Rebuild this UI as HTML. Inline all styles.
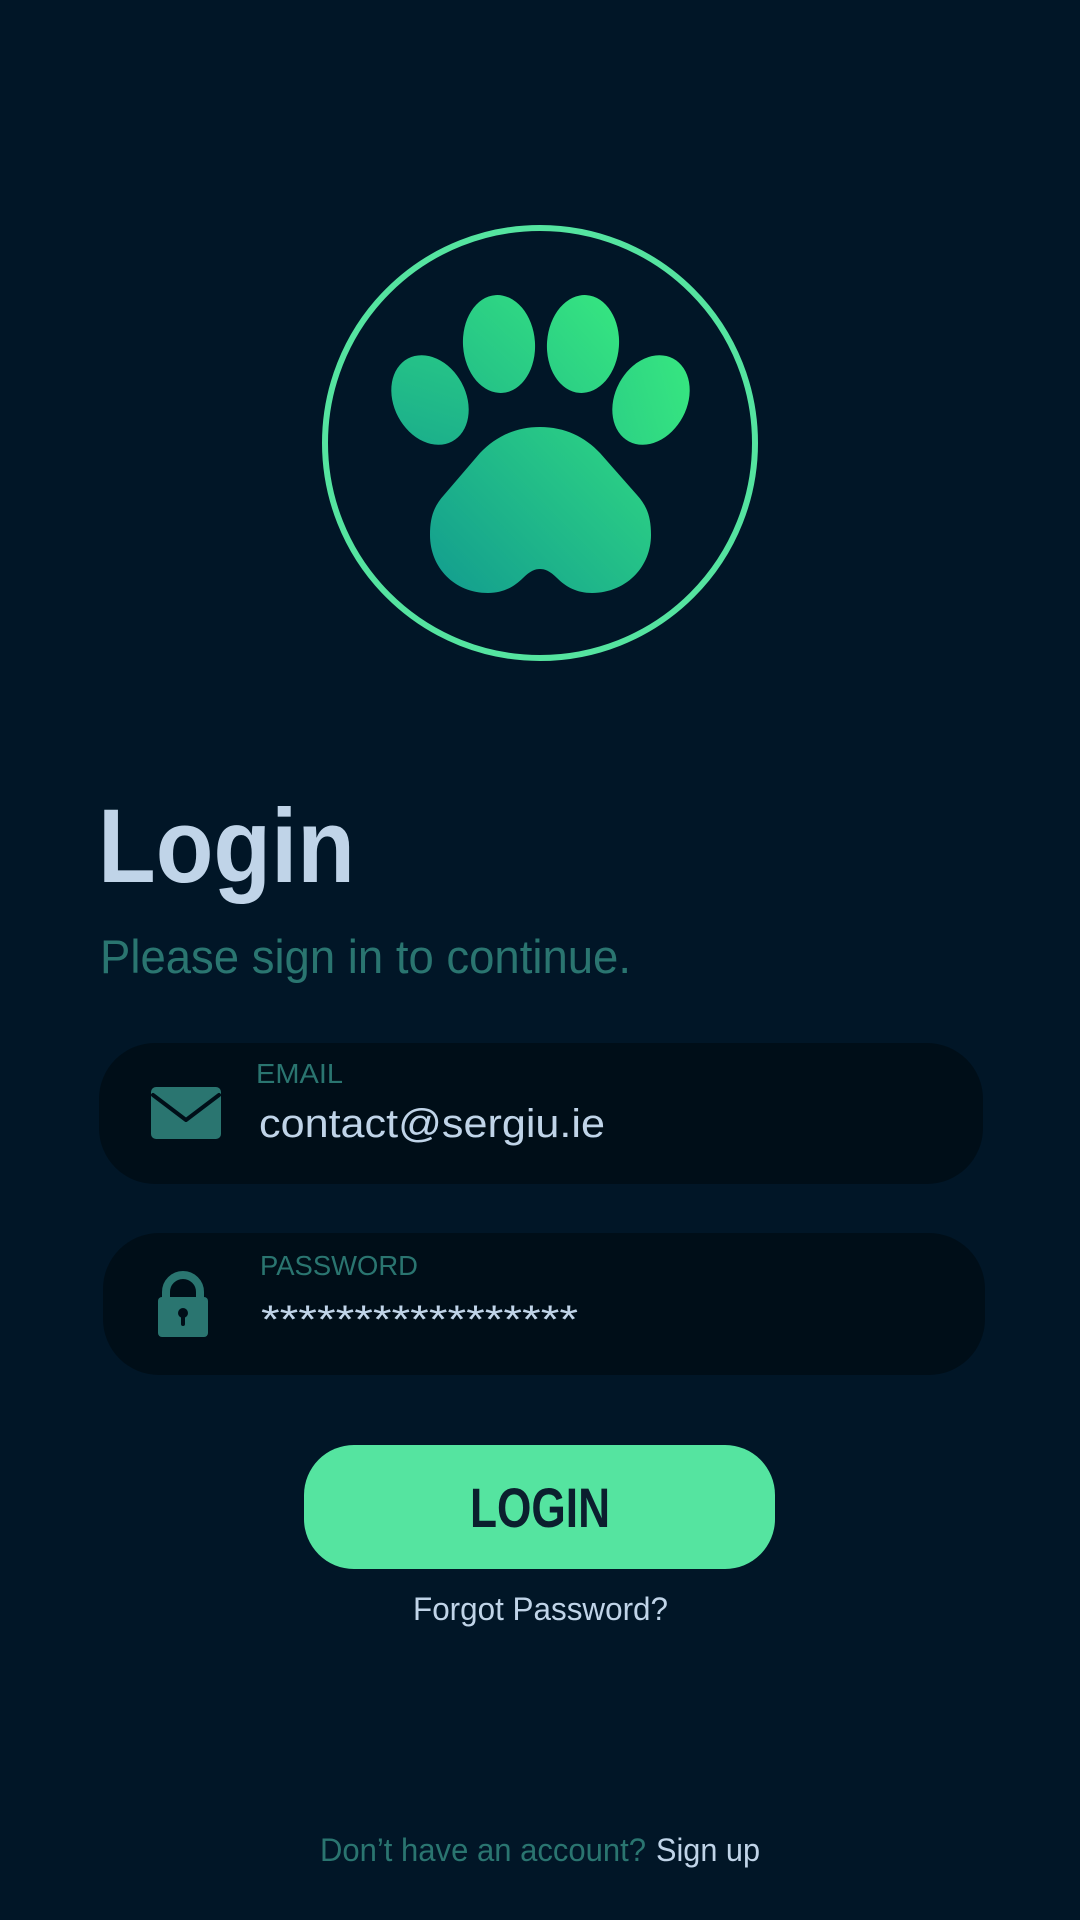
<!DOCTYPE html>
<html><head><meta charset="utf-8"><style>
html,body{margin:0;padding:0;background:#011627;}
svg{display:block;}
text{font-family:"Liberation Sans",Arial,sans-serif;}
</style></head><body>
<svg width="1080" height="1920" viewBox="0 0 1080 1920" xmlns="http://www.w3.org/2000/svg">
<defs>
<linearGradient id="g" x1="392" y1="593" x2="689" y2="300" gradientUnits="userSpaceOnUse">
<stop offset="0" stop-color="#0f9690"/><stop offset="1" stop-color="#3cf17e"/>
</linearGradient>
</defs>
<rect width="1080" height="1920" fill="#011627"/>
<circle cx="540" cy="443" r="215" fill="none" stroke="#55e4a0" stroke-width="6"/>
<g fill="url(#g)">
<ellipse cx="430" cy="400" rx="36" ry="47" transform="rotate(-28 430 400)"/>
<ellipse cx="499" cy="344" rx="36" ry="49" transform="rotate(-4 499 344)"/>
<ellipse cx="583" cy="344" rx="36" ry="49" transform="rotate(4 583 344)"/>
<ellipse cx="651" cy="400" rx="36" ry="47" transform="rotate(28 651 400)"/>
<path d="M540 427 C565 427 585 437 600 453 L637 495 C647 506 651 517 651 535 C651 568 625 593 592 593 C577 593 566 587 557 578 C550 571 545 569 540 569 C535 569 530 571 523 578 C514 587 503 593 488 593 C455 593 430 568 430 535 C430 517 434 506 444 495 L480 453 C495 437 515 427 540 427 Z"/>
</g>
<text x="98" y="882" font-size="105" font-weight="bold" fill="#c0d4e8" textLength="257" lengthAdjust="spacingAndGlyphs">Login</text>
<text x="100" y="973" font-size="47" fill="#2a7570" textLength="531" lengthAdjust="spacingAndGlyphs">Please sign in to continue.</text>

<rect x="99" y="1043" width="884" height="141" rx="56" fill="#000e18"/>
<rect x="151" y="1087" width="70" height="52" rx="5" fill="#2a7570"/>
<path d="M153 1095 L186 1120 L219 1095" fill="none" stroke="#000e18" stroke-width="4" stroke-linejoin="round" stroke-linecap="round"/>
<text x="256" y="1083" font-size="28" fill="#2a7570" textLength="87" lengthAdjust="spacingAndGlyphs">EMAIL</text>
<text x="259" y="1137" font-size="40" fill="#c0d4e8" textLength="346" lengthAdjust="spacingAndGlyphs">contact@sergiu.ie</text>

<rect x="103" y="1233" width="882" height="142" rx="56" fill="#000e18"/>
<path d="M166 1300 V1292 A17 17 0 0 1 200 1292 V1300" fill="none" stroke="#2a7570" stroke-width="8"/>
<rect x="158" y="1297" width="50" height="40" rx="4" fill="#2a7570"/>
<circle cx="183" cy="1313" r="5" fill="#000e18"/>
<rect x="181" y="1313" width="4" height="13" rx="2" fill="#000e18"/>
<text x="260" y="1275" font-size="28" fill="#2a7570" textLength="158" lengthAdjust="spacingAndGlyphs">PASSWORD</text>
<text x="261" y="1333" font-size="40" fill="#c0d4e8" textLength="317" lengthAdjust="spacingAndGlyphs">*****************</text>

<rect x="304" y="1445" width="471" height="124" rx="50" fill="#55e4a0"/>
<text x="470" y="1527" font-size="56" font-weight="bold" fill="#0b1f2e" textLength="140" lengthAdjust="spacingAndGlyphs">LOGIN</text>
<text x="413" y="1620" font-size="32" fill="#c0d4e8" textLength="255" lengthAdjust="spacingAndGlyphs">Forgot Password?</text>
<text x="320" y="1861" font-size="32" fill="#2a7570" textLength="326" lengthAdjust="spacingAndGlyphs">Don’t have an account?</text>
<text x="656" y="1861" font-size="32" fill="#c0d4e8" textLength="104" lengthAdjust="spacingAndGlyphs">Sign up</text>
</svg>
</body></html>
